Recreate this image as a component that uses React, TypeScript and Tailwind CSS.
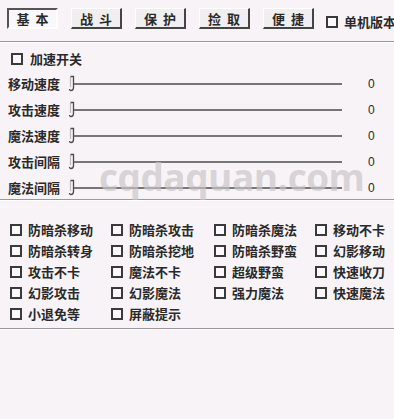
import React from "react";

const tabs = ["基本", "战斗", "保护", "捡取", "便捷"];
const sliders = ["移动速度", "攻击速度", "魔法速度", "攻击间隔", "魔法间隔"];
const options = [
  ["防暗杀移动", "防暗杀攻击", "防暗杀魔法", "移动不卡"],
  ["防暗杀转身", "防暗杀挖地", "防暗杀野蛮", "幻影移动"],
  ["攻击不卡", "魔法不卡", "超级野蛮", "快速收刀"],
  ["幻影攻击", "幻影魔法", "强力魔法", "快速魔法"],
  ["小退免等", "屏蔽提示"],
];

function Box() {
  return <span className="inline-block h-[12px] w-[12px] shrink-0 border-2 border-[#3a3a3a] bg-[#fbf9fb]" />;
}

function Separator() {
  return <div className="h-[2px] border-t border-[#9c989c] border-b border-b-white" />;
}

// small trackbar thumb, a thin pointer with a hooked tip
function Thumb() {
  return (
    <svg width="8" height="18" viewBox="0 0 8 18" className="shrink-0">
      <path d="M2.5 2 V12" stroke="#bdbabd" strokeWidth="1.2" fill="none" />
      <path d="M2.5 1.5 H5.5 V12.5 Q5.5 15.5 3 15.5 Q1.5 15.5 1.5 14" stroke="#4a4a4a" strokeWidth="1.3" fill="none" />
    </svg>
  );
}

export default function App() {
  return (
    <div
      className="relative h-[419px] w-[394px] overflow-hidden bg-[#f7f3f6] text-[13px] font-bold text-[#2a2a2a]"
      style={{ fontFamily: '"Noto Sans CJK SC", "Liberation Serif", serif' }}
    >
      {/* tab buttons */}
      <div className="flex h-[41px] items-start gap-[13px] whitespace-nowrap pl-[7px] pt-[8px]">
        {tabs.map((t, i) => (
          <button
            key={t}
            className={`h-[21px] w-[51px] shrink-0 pl-[6px] text-[13px] leading-none tracking-[6px] ${
              i === 0
                ? "border-2 border-t-[#555] border-l-[#555] border-r-white border-b-white bg-[#f9f7f9]"
                : "border border-t-white border-l-white border-r-2 border-b-2 border-r-[#444] border-b-[#444] bg-[#f1eef0]"
            }`}
          >
            {t}
          </button>
        ))}
        <div className="-ml-[1px] flex items-center gap-[6px] pt-[4px]">
          <Box />
          <span>单机版本</span>
        </div>
      </div>
      <Separator />

      {/* speed section */}
      <div className="flex h-[19px] items-center gap-[7px] pl-[11px] mt-[6px]">
        <Box />
        <span>加速开关</span>
      </div>
      <div className="flex flex-col gap-[6px] pt-[6px] pb-[1px]">
        {sliders.map((s) => (
          <div key={s} className="flex h-[20px] items-center">
            <span className="w-[68px] shrink-0 pl-[8px]">{s}</span>
            <Thumb />
            <div className="-ml-[2px] h-[2px] w-[268px] bg-[#767676]" />
            <span className="ml-[26px] text-[12px] font-normal" style={{ fontFamily: '"Liberation Sans", sans-serif' }}>
              0
            </span>
          </div>
        ))}
      </div>
      <Separator />

      {/* options */}
      <div className="flex flex-col gap-[5px] pl-[10px] pt-[19px] pb-[8px]">
        {options.map((row, r) => (
          <div key={r} className="grid h-[16px] grid-cols-[101px_103px_101px_80px] items-center">
            {row.map((o) => (
              <div key={o} className="flex items-center gap-[6px] whitespace-nowrap">
                <Box />
                <span>{o}</span>
              </div>
            ))}
          </div>
        ))}
      </div>
      <Separator />

      {/* watermark */}
      <div
        className="pointer-events-none absolute left-[99px] top-[158px] text-[37px] font-bold leading-none tracking-[-0.5px] text-[#c9c5c9]/70"
        style={{ fontFamily: '"Open Sans", "Liberation Sans", sans-serif' }}
      >
        cqdaquan.com
      </div>
    </div>
  );
}
